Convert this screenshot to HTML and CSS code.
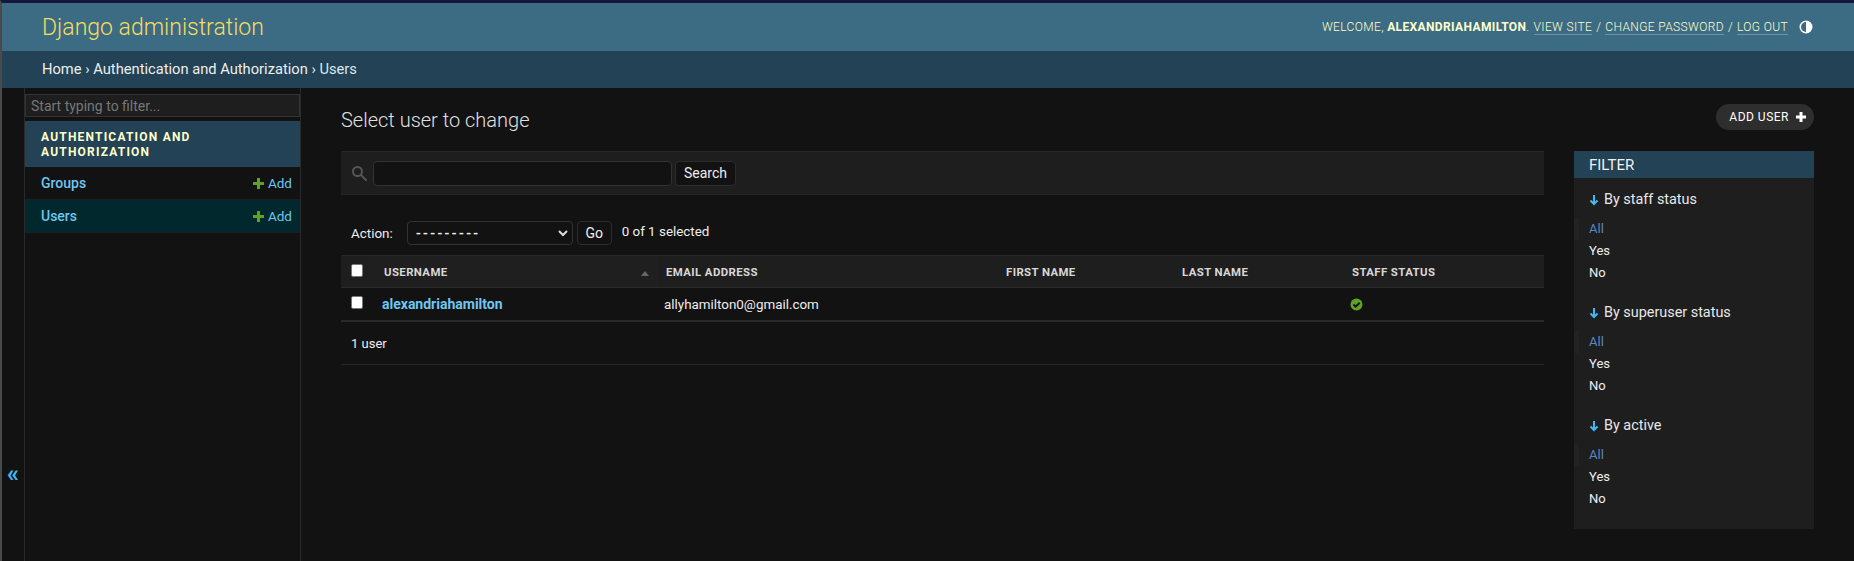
FILE: index.html
```html
<!DOCTYPE html>
<html lang="en">
<head>
  <meta charset="UTF-8">
  <title>Select user to change | Django site admin</title>
  <link rel="stylesheet" href="styles.css">
</head>
<body>
  <div class="page">
    <header class="header">
      <h1 class="branding">Django administration</h1>
      <div class="user-tools">
        <span>Welcome, <strong>alexandriahamilton</strong>.</span>
        <a href="#">View site</a> <span>/</span>
        <a href="#">Change password</a> <span>/</span>
        <a href="#">Log out</a>
        <svg class="theme-icon" width="16" height="16" viewBox="0 0 16 16">
          <circle cx="8" cy="8" r="6.500" fill="#fff"/>
          <path d="M8 3a5 5 0 0 0 0 10z" fill="#3c6b84"/>
        </svg>
      </div>
    </header>
    <nav class="breadcrumbs">
      <a href="#">Home</a> › <a href="#">Authentication and Authorization</a> › Users
    </nav>

    <div class="main">
      <button class="nav-toggle">«</button>
      <aside class="nav-sidebar">
        <input class="nav-filter" type="text" placeholder="Start typing to filter...">
        <div class="app-caption">Authentication and Authorization</div>
        <div class="model-row">
          <a href="#">Groups</a>
          <a class="addlink" href="#"><svg width="13" height="13" viewBox="0 0 13 13"><path d="M5 1h3v4h4v3H8v4H5V8H1V5h4z" fill="#5fa225"/></svg>Add</a>
        </div>
        <div class="model-row current">
          <a href="#">Users</a>
          <a class="addlink" href="#"><svg width="13" height="13" viewBox="0 0 13 13"><path d="M5 1h3v4h4v3H8v4H5V8H1V5h4z" fill="#5fa225"/></svg>Add</a>
        </div>
      </aside>

      <main class="content">
        <div class="content-head">
          <h2 class="title">Select user to change</h2>
          <a class="add-button" href="#">Add user
            <svg width="12" height="12" viewBox="0 0 12 12"><path d="M4.500 1h3v3.500H11v3H7.500V11h-3V7.500H1v-3h3.500z" fill="#fff"/></svg>
          </a>
        </div>
        <div class="columns">
          <div class="changelist">
            <div class="toolbar">
              <svg width="16" height="16" viewBox="0 0 16 16" fill="none" stroke="#555" stroke-width="2"><circle cx="6.500" cy="6.500" r="4.500"/><path d="M10 10l5 5" stroke-linecap="round"/></svg>
              <input class="search-input" type="text">
              <button class="btn">Search</button>
            </div>
            <div class="actions">
              <label>Action:</label>
              <div class="select-box"><span class="dashes">---------</span>
                <svg width="10" height="7" viewBox="0 0 10 7" fill="none" stroke="#ddd" stroke-width="2"><path d="M1 1l4 4 4-4"/></svg>
              </div>
              <button class="btn go">Go</button>
              <span class="counter">0 of 1 selected</span>
            </div>
            <div class="results">
              <div class="row head">
                <div class="cell check"><span class="checkbox"></span></div>
                <div class="cell username sorted">Username<i class="sort-arrow"></i></div>
                <div class="cell email">Email address</div>
                <div class="cell first">First name</div>
                <div class="cell last">Last name</div>
                <div class="cell staff">Staff status</div>
              </div>
              <div class="row body">
                <div class="cell check"><span class="checkbox"></span></div>
                <div class="cell username"><a href="#">alexandriahamilton</a></div>
                <div class="cell email">allyhamilton0@gmail.com</div>
                <div class="cell first"></div>
                <div class="cell last"></div>
                <div class="cell staff">
                  <svg width="13" height="13" viewBox="0 0 13 13"><circle cx="6.500" cy="6.500" r="6" fill="#5fa225"/><path d="M3.500 6.500l2.200 2.200 4-4" fill="none" stroke="#141414" stroke-width="2"/></svg>
                </div>
              </div>
            </div>
            <p class="paginator">1 user</p>
          </div>

          <aside class="filter">
            <h2 class="filter-title">Filter</h2>
            <div class="filter-group">
              <h3><svg class="arrow" width="10" height="12" viewBox="0 0 10 12" fill="none" stroke="#44b7ee" stroke-width="2"><path d="M5 1v9M1.500 6.500L5 10l3.500-3.500"/></svg>By staff status</h3>
              <ul>
                <li class="selected"><a href="#">All</a></li>
                <li><a href="#">Yes</a></li>
                <li><a href="#">No</a></li>
              </ul>
            </div>
            <div class="filter-group">
              <h3><svg class="arrow" width="10" height="12" viewBox="0 0 10 12" fill="none" stroke="#44b7ee" stroke-width="2"><path d="M5 1v9M1.500 6.500L5 10l3.500-3.500"/></svg>By superuser status</h3>
              <ul>
                <li class="selected"><a href="#">All</a></li>
                <li><a href="#">Yes</a></li>
                <li><a href="#">No</a></li>
              </ul>
            </div>
            <div class="filter-group">
              <h3><svg class="arrow" width="10" height="12" viewBox="0 0 10 12" fill="none" stroke="#44b7ee" stroke-width="2"><path d="M5 1v9M1.500 6.500L5 10l3.500-3.500"/></svg>By active</h3>
              <ul>
                <li class="selected"><a href="#">All</a></li>
                <li><a href="#">Yes</a></li>
                <li><a href="#">No</a></li>
              </ul>
            </div>
          </aside>
        </div>
      </main>
    </div>
  </div>
</body>
</html>
```

FILE: styles.css
```css
* {
  box-sizing: border-box;
}

html, body {
  height: 100%;
}

body {
  margin: 0;
  background-color: #121212;
  border-top: 3px solid #14183a;
  border-left: 2px solid #4a4a4a;
  color: #eeeeee;
  font-family: Roboto, "Liberation Sans", sans-serif;
  font-size: 14px;
  overflow: hidden;
}

a {
  color: inherit;
  text-decoration: none;
}

.page {
  display: flex;
  flex-direction: column;
  height: 100%;
}

/* Header */
.header {
  display: flex;
  justify-content: space-between;
  align-items: center;
  height: 48px;
  padding: 0 40px;
  background-color: #3c6b84;
  color: #ffffcc;
}

.branding {
  margin: 0;
  font-size: 23px;
  font-weight: 300;
  color: #f5dd5d;
}

.user-tools {
  display: flex;
  align-items: center;
  gap: 4px;
  font-size: 12px;
  font-weight: 300;
  letter-spacing: 0.37px;
  text-transform: uppercase;
}

.user-tools strong {
  font-weight: 700;
}

.user-tools a {
  border-bottom: 1px solid rgba(255, 255, 255, 0.25);
}

.theme-icon {
  margin-left: 6px;
}

.breadcrumbs {
  height: 37px;
  padding: 0 40px;
  line-height: 37px;
  background-color: #234255;
  color: #d8e8f0;
  font-size: 14.700px;
  font-weight: 400;
}

.breadcrumbs a {
  color: #eeeeee;
}

/* Layout */
.main {
  display: flex;
  flex: 1;
  min-height: 0;
}

.nav-toggle {
  width: 23px;
  padding: 298px 0 0;
  border: none;
  border-right: 1px solid #2a2a2a;
  background-color: #121212;
  color: #44b7ee;
  font-size: 24px;
  font-weight: 700;
  font-family: Roboto, sans-serif;
}

.nav-sidebar {
  width: 276px;
  border-right: 1px solid #2a2a2a;
}

.nav-filter {
  display: block;
  width: 100%;
  height: 23px;
  margin: 6px 0 4px;
  padding: 0 5px;
  background-color: #1e1e1e;
  border: 1px solid #333;
  color: #eee;
  font-size: 14px;
  font-family: inherit;
}

.nav-filter::placeholder {
  color: #777777;
}

.app-caption {
  height: 46px;
  padding: 9px 16px 0;
  background-color: #234255;
  color: #ffffcc;
  font-size: 12px;
  line-height: 15px;
  font-weight: 700;
  letter-spacing: 1.2px;
  text-transform: uppercase;
}

.model-row {
  display: flex;
  justify-content: space-between;
  align-items: center;
  height: 33px;
  padding: 0 8px 0 16px;
  border-bottom: 1px solid #1e1e1e;
  color: #6fc6f2;
  font-size: 14px;
  font-weight: 500;
}

.model-row.current {
  background-color: #00282d;
}

.addlink {
  display: flex;
  align-items: center;
  gap: 3px;
  font-size: 13.500px;
  font-weight: 400;
}

.content {
  flex: 1;
  min-width: 0;
  padding: 0 40px;
}

.content-head {
  display: flex;
  justify-content: space-between;
  align-items: center;
  height: 63px;
}

.title {
  margin: 0;
  font-size: 20px;
  font-weight: 300;
  color: #e0e0e0;
}

.add-button {
  display: flex;
  align-items: center;
  align-self: flex-start;
  gap: 6px;
  height: 26px;
  margin-top: 16px;
  padding: 0 7px 0 13px;
  border-radius: 13px;
  background-color: #2e2e2e;
  color: #fff;
  font-size: 12px;
  letter-spacing: 0.5px;
  text-transform: uppercase;
}

.columns {
  display: flex;
  align-items: flex-start;
  gap: 30px;
}

.changelist {
  flex: 1;
  min-width: 0;
}

/* Search and actions */
.toolbar {
  display: flex;
  align-items: center;
  height: 44px;
  padding: 0 10px;
  background-color: #1e1e1e;
  border-top: 1px solid #252525;
  border-bottom: 1px solid #252525;
}

.search-input {
  width: 299px;
  height: 25px;
  margin: 0 3px 0 6px;
  background-color: #121212;
  border: 1px solid #333;
  border-radius: 4px;
}

.btn {
  height: 25px;
  padding: 0 8px;
  background-color: #121212;
  border: 1px solid #2c2c2c;
  border-radius: 4px;
  color: #eeeeee;
  font-family: inherit;
  font-size: 14px;
}

.actions {
  display: flex;
  align-items: center;
  height: 60px;
  padding: 16px 10px 0;
  font-size: 13.400px;
}

.select-box {
  display: flex;
  justify-content: space-between;
  align-items: center;
  width: 166px;
  height: 24px;
  margin-left: 14px;
  padding: 0 4px 0 8px;
  background-color: #121212;
  border: 1px solid #333;
  border-radius: 4px;
  color: #eeeeee;
  font-weight: 700;
}

.dashes {
  letter-spacing: 1.900px;
}

.go {
  width: 35px;
  height: 24px;
  margin-left: 4px;
  padding: 0;
}

.counter {
  margin-left: 10px;
  margin-top: -3px;
}

/* Results table */
.row {
  display: flex;
  align-items: center;
}

.row.head {
  height: 33px;
  padding-top: 1px;
  background-color: #1e1e1e;
  border-top: 1px solid #252525;
  border-bottom: 1px solid #2a2a2a;
  color: #d8d8d8;
  font-size: 11.400px;
  font-weight: 700;
  letter-spacing: 0.4px;
  text-transform: uppercase;
}

.row.body {
  height: 34px;
  border-bottom: 2px solid #2a2a2a;
  font-size: 13.400px;
}

.cell {
  display: flex;
  align-items: center;
  height: 100%;
  padding-left: 8px;
}

.check {
  width: 28px;
  padding-left: 10px;
  padding-bottom: 3px;
}

.checkbox {
  width: 12px;
  height: 13px;
  background-color: #fff;
  border: 1px solid #777;
  border-radius: 2px;
}

.username {
  position: relative;
  width: 289px;
  padding-left: 15px;
}

.body .username {
  padding-left: 13px;
  font-size: 14px;
}

.username a {
  color: #6fc6f2;
  font-weight: 700;
}

.row.head .username {
  background-color: #1f1f1f;
}

.sort-arrow {
  position: absolute;
  right: 9px;
  top: 14px;
  border-left: 4px solid transparent;
  border-right: 4px solid transparent;
  border-bottom: 5px solid #666;
}

.email {
  width: 340px;
}

.body .email,
.body .staff {
  padding-left: 6px;
}

.first {
  width: 176px;
}

.last {
  width: 170px;
}

.staff {
  flex: 1;
}

.paginator {
  display: flex;
  align-items: center;
  height: 43px;
  margin: 0;
  padding: 0 10px;
  border-bottom: 1px solid #252525;
  font-size: 13px;
}

/* Filter */
.filter {
  width: 240px;
  flex-shrink: 0;
  padding-bottom: 12px;
  background-color: #1e1e1e;
}

.filter-title {
  height: 27px;
  margin: 0;
  padding-left: 15px;
  background-color: #234255;
  color: #f0f0f0;
  font-size: 15px;
  font-weight: 400;
  line-height: 28px;
  text-transform: uppercase;
}

.filter-group {
  height: 113px;
  padding-top: 12px;
}

.filter-group h3 {
  display: flex;
  align-items: center;
  gap: 5px;
  margin: 0 0 8px;
  padding-left: 15px;
  font-size: 14.400px;
  font-weight: 400;
  line-height: 20px;
  color: #e8e8e8;
}

.filter-group ul {
  margin: 0;
  padding: 0;
  list-style: none;
  font-size: 13px;
  line-height: 22.200px;
}

.filter-group li {
  padding-left: 15px;
}

.filter-group li.selected {
  padding-left: 10px;
  border-left: 5px solid #222222;
}

.selected a {
  color: #5b85c0;
}
```
